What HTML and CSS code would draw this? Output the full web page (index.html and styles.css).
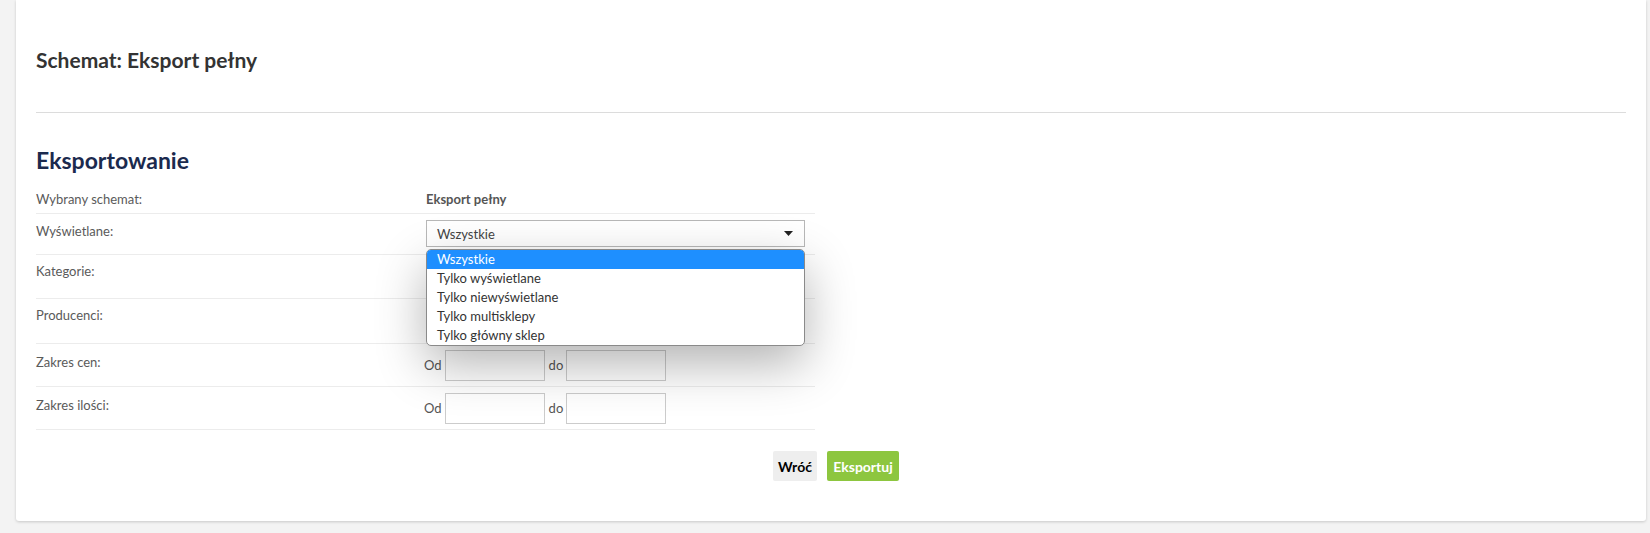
FILE: index.html
```
<!DOCTYPE html>
<html lang="pl">
<head>
<meta charset="utf-8">
<title>Schemat: Eksport pełny</title>
<link rel="stylesheet" href="styles.css">
</head>
<body>
<div class="card">
  <h2 class="title">Schemat: Eksport pełny</h2>
  <hr class="sep">
  <h3 class="heading">Eksportowanie</h3>
  <div class="form">
    <div class="row r1">
      <div class="label">Wybrany schemat:</div>
      <div class="value strong">Eksport pełny</div>
    </div>
    <div class="row r2">
      <div class="label">Wyświetlane:</div>
      <div class="value">
        <div class="select-wrap">
          <div class="select">
            <span>Wszystkie</span>
            <svg class="caret" width="9" height="5" viewBox="0 0 9 5"><path d="M0 0H9L4.5 5Z" fill="#222"/></svg>
          </div>
          <ul class="dropdown">
            <li class="active">Wszystkie</li>
            <li>Tylko wyświetlane</li>
            <li>Tylko niewyświetlane</li>
            <li>Tylko multisklepy</li>
            <li>Tylko główny sklep</li>
          </ul>
        </div>
      </div>
    </div>
    <div class="row r3">
      <div class="label">Kategorie:</div>
      <div class="value"></div>
    </div>
    <div class="row r4">
      <div class="label">Producenci:</div>
      <div class="value"></div>
    </div>
    <div class="row r5">
      <div class="label">Zakres cen:</div>
      <div class="value range">
        <span>Od</span><input type="text" class="inp"><span>do</span><input type="text" class="inp">
      </div>
    </div>
    <div class="row r6">
      <div class="label">Zakres ilości:</div>
      <div class="value range">
        <span>Od</span><input type="text" class="inp"><span>do</span><input type="text" class="inp">
      </div>
    </div>
  </div>
  <div class="actions">
    <button class="btn btn-back">Wróć</button>
    <button class="btn btn-export">Eksportuj</button>
  </div>
</div>
</body>
</html>
```

FILE: styles.css
```
* { box-sizing: border-box; }
html, body { margin: 0; padding: 0; }
body {
  background: #f3f3f3;
  font-family: Lato, "Liberation Sans", sans-serif;
  color: #555;
  font-size: 13px;
  height: 533px;
  overflow: hidden;
}
.card {
  margin: 0 4px 0 16px;
  background: #fff;
  height: 521px;
  padding: 40px 20px 0 20px;
  box-shadow: 0 1px 3px rgba(0,0,0,0.18);
  border-radius: 0 0 3px 3px;
}
.title {
  margin: 0;
  font-size: 21px;
  line-height: 40px;
  font-weight: 700;
  color: #333;
}
.sep {
  margin: 32px 0 0 0;
  border: 0;
  border-top: 1px solid #dcdcdc;
  height: 0;
}
.heading {
  margin: 32px 0 0 0;
  font-size: 23px;
  line-height: 30px;
  font-weight: 700;
  color: #1b2a4e;
}
.form {
  width: 779px;
}
.row {
  display: grid;
  grid-template-columns: 390px 1fr;
  border-bottom: 1px solid #ececec;
}
.label {
  line-height: 20px;
  padding-top: 8px;
  color: #5a5a5a;
}
.r1 { height: 39px; }
.r1 .label, .r1 .value { padding-top: 14px; }
.strong { font-weight: 700; color: #555; line-height: 20px; }
.r2 { height: 41px; }
.r2 .label { padding-top: 7px; }
.r2 .value { padding-top: 6px; }
.r3 { height: 44px; }
.r3 .label { padding-top: 6px; }
.r4 { height: 45px; }
.r4 .label { padding-top: 6px; }
.r5, .r6 { height: 43px; }
.r5 .label, .r6 .label { padding-top: 8px; }
.range {
  display: flex;
  align-items: center;
  padding-top: 6px;
  height: 36px;
  margin-left: -2px;
  color: #555;
}
.range span { line-height: 20px; }
.inp {
  width: 100px;
  height: 31px;
  border: 1px solid #ccc;
  background: #fff;
  margin: 0 4px 0 3px;
  padding: 0;
  font: inherit;
}
.select-wrap {
  position: relative;
  width: 379px;
}
.select {
  height: 27px;
  border: 1px solid #b8b8b8;
  background: #fff;
  display: flex;
  align-items: center;
  justify-content: space-between;
  padding: 0 11px 0 10px;
  color: #444;
  line-height: 20px;
}
.dropdown {
  position: absolute;
  top: 29px;
  left: 0;
  width: 379px;
  margin: 0;
  padding: 0;
  list-style: none;
  background: #fff;
  border: 1px solid #8a8a8a;
  border-radius: 5px;
  overflow: hidden;
  box-shadow: 0 18px 50px rgba(0,0,0,0.3);
  z-index: 10;
}
.dropdown li {
  height: 19px;
  line-height: 19px;
  padding-left: 10px;
  color: #333;
}
.dropdown li.active {
  background: #1e8fff;
  color: #fff;
}
.actions {
  display: flex;
  gap: 10px;
  margin: 21px 0 0 737px;
}
.btn {
  height: 30px;
  border: 0;
  border-radius: 2px;
  font-family: inherit;
  font-size: 14px;
  font-weight: 700;
  padding: 0;
  cursor: pointer;
}
.btn-back {
  width: 44px;
  background: #eeeeee;
  color: #000;
}
.btn-export {
  width: 72px;
  background: #8dc63f;
  color: #fff;
}
```
